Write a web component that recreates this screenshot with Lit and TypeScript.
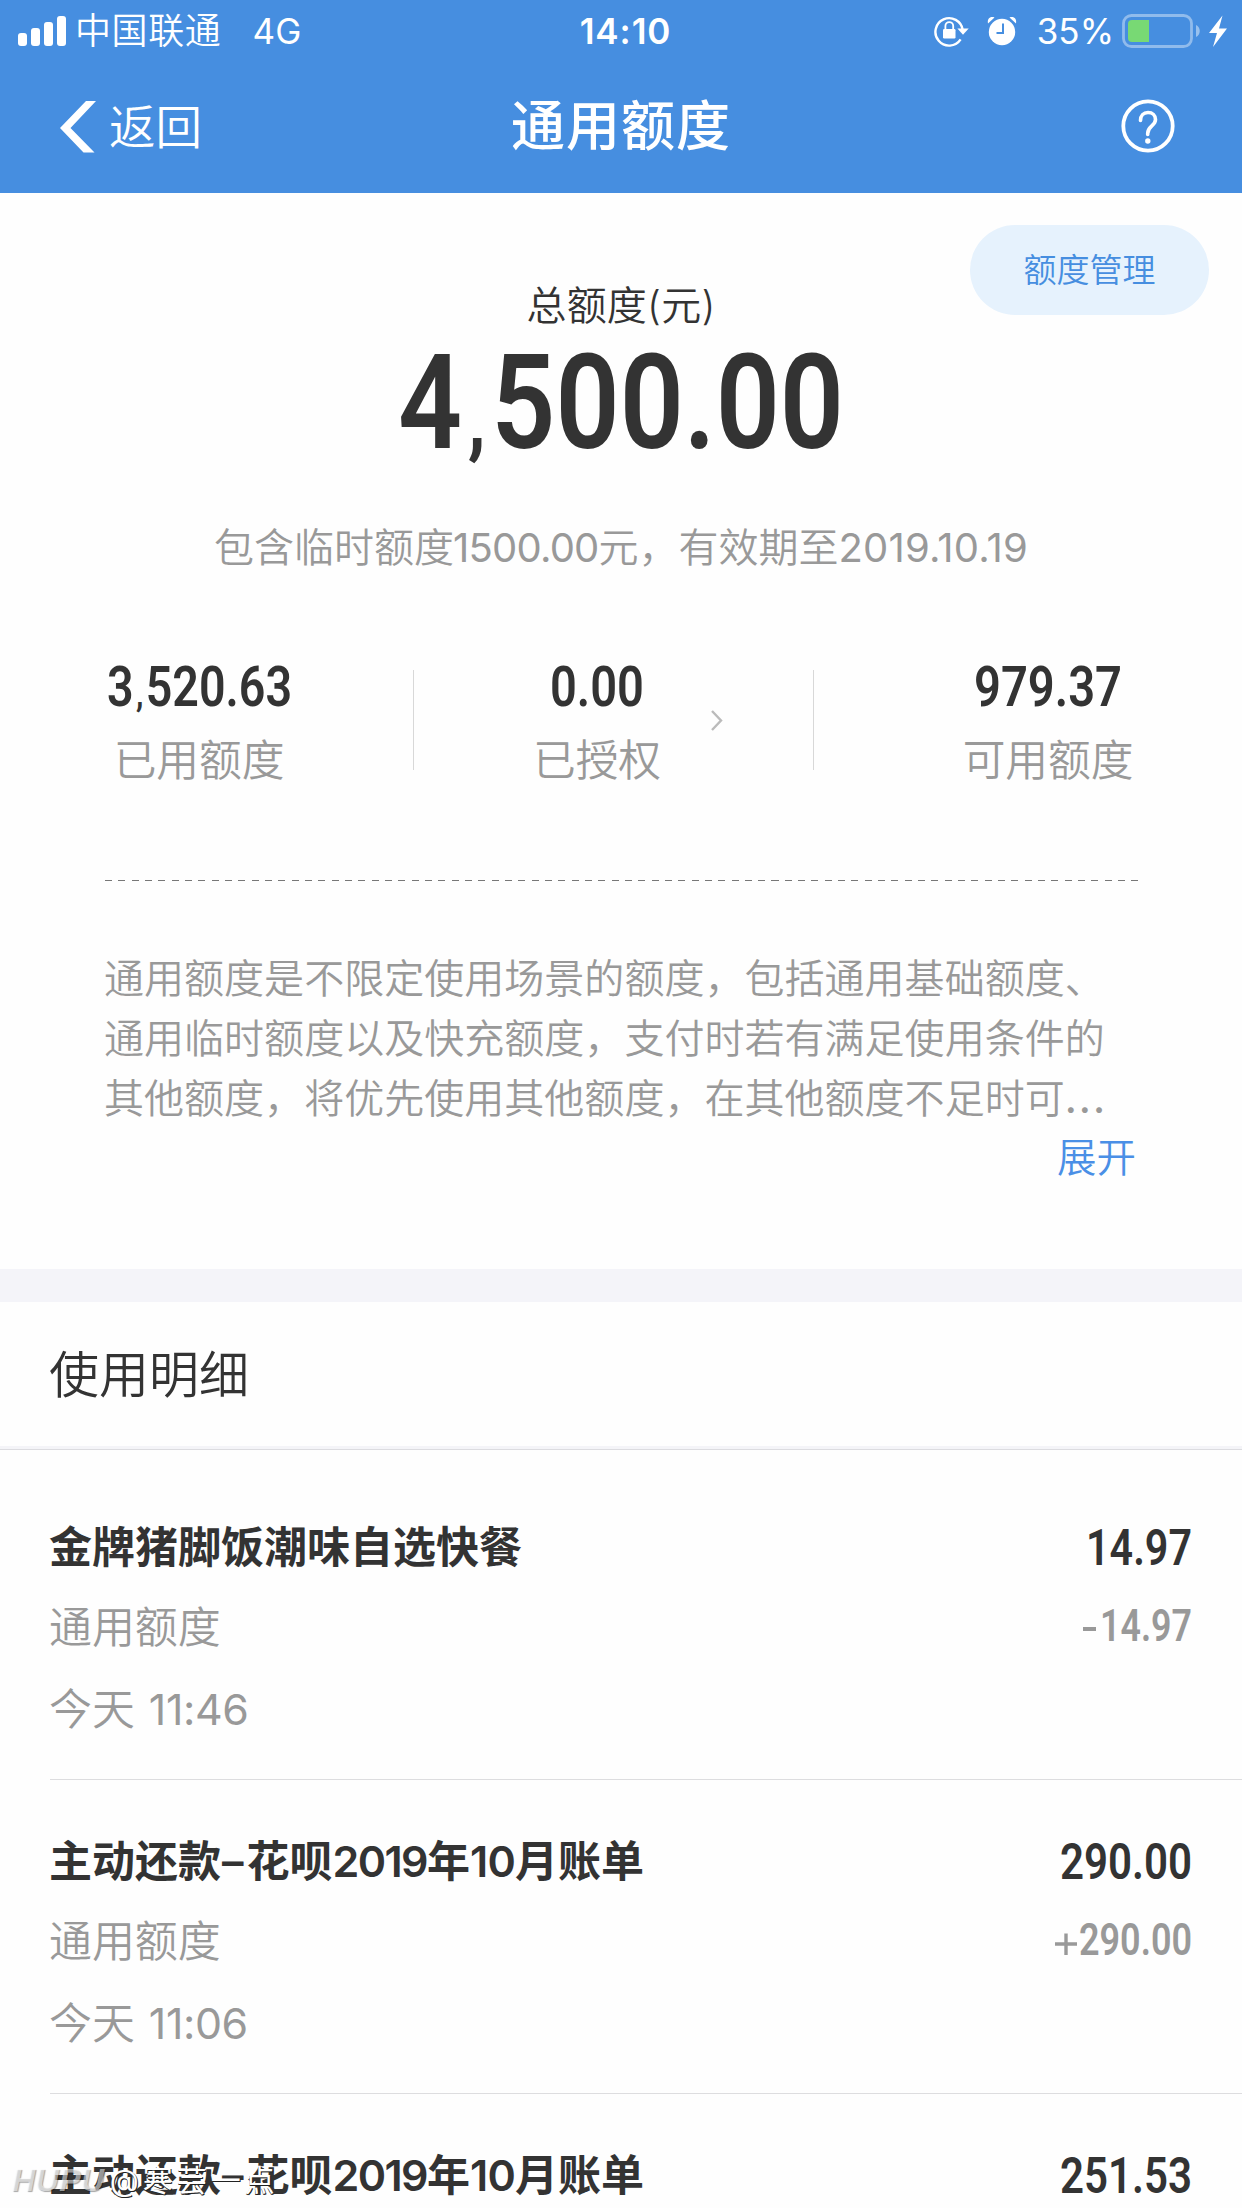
import { LitElement, html, svg, css } from "lit";
import { customElement, property } from "lit/decorators.js";

/** A condensed money figure: one line of text stretched to an exact width. */
@customElement("money-figure")
class MoneyFigure extends LitElement {
  @property() text = "";
  @property({ type: Number }) width = 100;
  @property({ type: Number }) size = 50;
  @property({ type: Number }) height = 36;

  static styles = css`
    :host { display: block; }
    .canvas { display: block; overflow: visible; }
    .digits { font-family: Roboto, "Liberation Sans", sans-serif; font-weight: 600; fill: currentColor; }
  `;

  render() {
    const [head, tail] = this.text.split(",");
    const gap = this.size * 0.05;
    const content = tail === undefined
      ? head
      : svg`${head}<tspan font-size=${this.size * 0.68} dx=${gap}>,</tspan><tspan dx=${gap}>${tail}</tspan>`;
    return html`<svg class="canvas" width=${this.width} height=${this.height}>
      <text class="digits" x="0" y=${this.height} font-size=${this.size}
        textLength=${this.width} lengthAdjust="spacingAndGlyphs">${content}</text>
    </svg>`;
  }
}

interface Entry {
  title: string;
  time: string;
  amount: string;
  amountWidth: number;
  sign: string;
  change: string;
  changeWidth: number;
}

const ENTRIES: Entry[] = [
  { title: "金牌猪脚饭潮味自选快餐", time: "11:46", amount: "14.97", amountWidth: 106, sign: "-", change: "14.97", changeWidth: 92 },
  { title: "主动还款–花呗2019年10月账单", time: "11:06", amount: "290.00", amountWidth: 132, sign: "+", change: "290.00", changeWidth: 113 },
  { title: "主动还款–花呗2019年10月账单", time: "10:58", amount: "251.53", amountWidth: 132, sign: "+", change: "251.53", changeWidth: 113 },
];

@customElement("usage-row")
class UsageRow extends LitElement {
  @property({ attribute: false }) entry!: Entry;

  static styles = css`
    :host { display: block; }
    .row {
      box-sizing: border-box; height: 314px; margin-left: 50px; padding: 56px 50px 0 0;
      border-bottom: 1px solid #dddddf; display: flex; justify-content: space-between;
      white-space: nowrap;
    }
    .left { display: flex; flex-direction: column; line-height: 50px; color: #999; font-size: 42.900px; margin-left: -1px; }
    .title { color: #333; font-weight: 600; font-size: 43px; }
    .year { letter-spacing: -1.6px; }
    .month { letter-spacing: -0.700px; }
    .dash { margin: 0 3px 0 1px; }
    .kind { margin-top: 30px; font-weight: 350; }
    .time { margin-top: 32px; font-weight: 350; word-spacing: 2px; }
    .clock { font-weight: 400; letter-spacing: -0.400px; }
    .right { display: flex; flex-direction: column; align-items: flex-end; color: #333; padding-top: 7px; }
    .change { display: flex; align-items: flex-end; gap: 2px; margin-top: 45px; color: #999; }
    .sign { display: block; }
  `;

  private titleParts(text: string) {
    return text.split(/(\d+|–)/).map((part) => {
      if (part === "–") return html`<span class="dash">–</span>`;
      if (/\d/.test(part)) return html`<span class=${part.length > 2 ? "year" : "month"}>${part}</span>`;
      return part;
    });
  }

  render() {
    const e = this.entry;
    return html`<div class="row">
      <div class="left">
        <div class="title">${this.titleParts(e.title)}</div>
        <div class="kind">通用额度</div>
        <div class="time">今天 <span class="clock">${e.time}</span></div>
      </div>
      <div class="right">
        <money-figure .text=${e.amount} .width=${e.amountWidth} .size=${50} .height=${36}></money-figure>
        <div class="change">
          ${e.sign === "+"
            ? html`<svg class="sign" width="22" height="31"><path d="M0 20h22M11 9.500v21.500" stroke="#999" stroke-width="3.400"/></svg>`
            : html`<svg class="sign" width="15" height="31"><path d="M0 19h13" stroke="#999" stroke-width="4"/></svg>`}
          <money-figure .text=${e.change} .width=${e.changeWidth} .size=${43.5} .height=${31}></money-figure>
        </div>
      </div>
    </div>`;
  }
}

@customElement("app-root")
class AppRoot extends LitElement {
  static styles = css`
    :host {
      display: block; position: relative; width: 1242px; height: 2208px; overflow: hidden;
      background: #fefefe; color: #333; white-space: nowrap;
      font-family: Inter, "Noto Sans CJK SC", sans-serif;
    }
    .header { height: 193px; background: #468ee0; color: #fff; }
    .status { height: 60px; display: grid; grid-template-columns: 1fr auto 1fr; align-items: center; }
    .status-left { display: flex; align-items: center; padding-left: 18px; }
    .carrier { margin-left: 9px; font-size: 36px; line-height: 61px; letter-spacing: 0.6px; font-weight: 350; }
    .network { margin-left: 31px; font-size: 35px; line-height: 62px; letter-spacing: 0.3px; }
    .clock { font-size: 35px; line-height: 62px; font-weight: 600; letter-spacing: 0.9px; padding-left: 9px; }
    .status-right { display: flex; align-items: center; justify-content: flex-end; padding-right: 13px; }
    .alarm { margin-left: 17px; }
    .percent { margin: 0 8px 0 20px; font-size: 35px; line-height: 62px; }
    .nav { height: 133px; display: grid; grid-template-columns: 1fr auto 1fr; align-items: center; }
    .back { display: flex; align-items: center; padding-left: 60px; gap: 13px; font-size: 46.500px; line-height: 60px; font-weight: 350; }
    .nav-title { font-size: 54px; letter-spacing: 1px; line-height: 71px; font-weight: 500; }
    .help { justify-self: end; margin: 0 67px 2px 0; }

    .summary { height: 1076px; display: flex; flex-direction: column; }
    .top { display: grid; grid-template-columns: 1fr auto 1fr; height: 100px; margin-top: 32px; }
    .total-label { grid-column: 2; margin-top: 60px; font-size: 40px; line-height: 41px; font-weight: 350; letter-spacing: 0.200px; }
    .manage {
      grid-column: 3; justify-self: end; margin-right: 33px; width: 239px; height: 90px; border-radius: 45px;
      background: #e6f2fd; color: #468ee0; font-size: 33px; line-height: 90px; text-align: center; font-weight: 350;
    }
    .total { align-self: center; margin-top: 20px; }
    .note { align-self: center; margin-top: 70px; font-size: 40px; line-height: 60px; color: #999; font-weight: 350; }
    .note-sum { font-weight: 400; letter-spacing: -0.800px; margin-left: -1px; }
    .note-date { font-weight: 400; letter-spacing: 0.200px; }
    .stats { height: 125px; margin-top: 82px; padding: 0 110px 0 104px; display: flex; align-items: flex-start; }
    .stat { display: flex; flex-direction: column; align-items: center; padding-top: 7px; }
    .used { width: 190px; }
    .granted { width: 126px; margin-left: 120px; }
    .available { width: 168px; margin-left: auto; }
    .stat-label { margin-top: 29px; font-size: 42.700px; line-height: 51px; color: #999; font-weight: 350; }
    .rule { width: 1px; height: 100px; margin-top: 10px; background: #d8d8d8; }
    .rule-first { margin-left: 119px; }
    .rule-second { margin-left: 90px; }
    .more { margin: 50px 0 0 51px; display: block; }
    .dashes {
      height: 1px; margin: 95px 104px 0 105px;
      background: repeating-linear-gradient(90deg, #777 0 7px, transparent 7px 13.330px);
    }
    .about { margin: 68px 0 0 104px; font-size: 40px; line-height: 60px; letter-spacing: 0.030px; color: #999; font-weight: 350; }
    .dots { letter-spacing: 2px; font-weight: 500; }
    .expand { align-self: flex-end; margin-right: 106px; font-size: 39.500px; line-height: 58px; color: #4a8fe6; font-weight: 350; }

    .band { height: 33px; background: #f4f4f9; }
    .section-title { height: 144px; padding-left: 49px; font-size: 50px; line-height: 147px; font-weight: 350; }
    .section-edge { height: 3px; background: #f4f4f8; border-bottom: 1px solid #dcdce0; }
    .list { padding-top: 16px; }

    .watermark { position: absolute; left: 12px; top: 2157px; display: flex; align-items: center; line-height: 46px; }
    .brand {
      font: italic 700 32px/46px "Liberation Sans", sans-serif; letter-spacing: 0.500px;
      color: rgba(255, 255, 255, 0.550); text-shadow: 1px 1px 1px rgba(0, 0, 0, 0.350);
    }
    .author {
      margin-left: 5px; font-size: 30px; letter-spacing: 4px; color: #fff; font-weight: 400;
      text-shadow: 1px 1px 0 #222, 0 1px 0 #333;
    }
  `;

  private statusIcons() {
    return html`
      <svg width="36" height="32" viewBox="0 0 36 32" fill="none">
        <path d="M26.600 24.400A13.700 13.700 0 1 1 28.700 15" stroke="#fff" stroke-width="2.400"/>
        <path d="M23.400 13.500h11.300l-5.700 6.300z" fill="#fff"/>
        <rect x="9" y="14" width="12.500" height="9.500" rx="1.200" fill="#fff"/>
        <path d="M11.400 15v-4a3.900 3.900 0 0 1 7.800 0v4" stroke="#fff" stroke-width="1.800"/>
      </svg>
      <svg class="alarm" width="30" height="30" viewBox="0 0 30 30">
        <circle cx="15" cy="16" r="13.200" fill="#fff"/>
        <path d="M1 7.500C0 3 3 0 7.500 1.500zM29 7.500C30 3 27 0 22.500 1.500z" fill="#fff"/>
        <path d="M16 7.500v9.500H9.500" fill="none" stroke="#468ee0" stroke-width="2"/>
      </svg>
      <span class="percent">35%</span>
      <svg width="107" height="36" viewBox="0 0 107 36">
        <rect x="1.500" y="2.500" width="68" height="31" rx="8" fill="none" stroke="#fff" stroke-opacity="0.400" stroke-width="2.800"/>
        <path d="M10 7H27V29H10a4 4 0 0 1-4-4V11a4 4 0 0 1 4-4z" fill="#78d974"/>
        <path d="M74 12c5 2 5 10 0 12z" fill="#fff" fill-opacity="0.450"/>
        <path d="M100.500 2.500L87 20h8L91 34l14-18.500h-8z" fill="#fff"/>
      </svg>`;
  }

  render() {
    return html`
      <div class="header">
        <div class="status">
          <div class="status-left">
            <svg width="48" height="32" viewBox="0 0 48 32" fill="#fff">
              ${[[0, 13], [13, 18], [26, 24], [39, 30]].map(
                ([x, h]) => svg`<rect x=${x} y=${31 - h} width="9" height=${h} rx="3"/>`
              )}
            </svg>
            <span class="carrier">中国联通</span>
            <span class="network">4G</span>
          </div>
          <div class="clock">14:10</div>
          <div class="status-right">${this.statusIcons()}</div>
        </div>
        <div class="nav">
          <div class="back">
            <svg width="36" height="52" viewBox="0 0 36 52" fill="#fff"><path d="M0 27L26 0H36L10.500 27L34.500 51.500H23.500z"/></svg>
            <span>返回</span>
          </div>
          <div class="nav-title">通用额度</div>
          <svg class="help" width="54" height="54" viewBox="0 0 54 54" fill="none" stroke="#fff">
            <circle cx="27" cy="27" r="24.700" stroke-width="3.800"/>
            <path d="M19.500 21.500C19.500 16.500 22.500 13.500 27 13.500C31.500 13.500 34.500 16.500 34.500 20.500C34.500 27 26.700 27 26.700 34.500V35.500" stroke-width="3.600" stroke-linecap="round"/>
            <circle cx="26.800" cy="42" r="2.700" fill="#fff" stroke="none"/>
          </svg>
        </div>
      </div>

      <div class="summary">
        <div class="top">
          <div class="total-label">总额度(元)</div>
          <div class="manage">额度管理</div>
        </div>
        <money-figure class="total" .text=${"4,500.00"} .width=${446} .size=${132} .height=${103}></money-figure>
        <div class="note">包含临时额度<span class="note-sum">1500.00</span>元，有效期至<span class="note-date">2019.10.19</span></div>
        <div class="stats">
          <div class="stat used">
            <money-figure .text=${"3,520.63"} .width=${185} .size=${55} .height=${39}></money-figure>
            <div class="stat-label">已用额度</div>
          </div>
          <div class="rule rule-first"></div>
          <div class="stat granted">
            <money-figure .text=${"0.00"} .width=${94} .size=${55} .height=${39}></money-figure>
            <div class="stat-label">已授权</div>
          </div>
          <svg class="more" width="12" height="21" viewBox="0 0 12 21" fill="none"><path d="M1 1L10 10.500L1 20" stroke="#bbb" stroke-width="2.400"/></svg>
          <div class="rule rule-second"></div>
          <div class="stat available">
            <money-figure .text=${"979.37"} .width=${148} .size=${55} .height=${39}></money-figure>
            <div class="stat-label">可用额度</div>
          </div>
        </div>
        <div class="dashes"></div>
        <div class="about">
          <div>通用额度是不限定使用场景的额度，包括通用基础额度、</div>
          <div>通用临时额度以及快充额度，支付时若有满足使用条件的</div>
          <div>其他额度，将优先使用其他额度，在其他额度不足时可<span class="dots">...</span></div>
        </div>
        <div class="expand">展开</div>
      </div>

      <div class="band"></div>
      <div class="section-title">使用明细</div>
      <div class="section-edge"></div>
      <div class="list">${ENTRIES.map((entry) => html`<usage-row .entry=${entry}></usage-row>`)}</div>

      <div class="watermark"><span class="brand">HUPU</span><span class="author">@寒芸一点</span></div>
    `;
  }
}
